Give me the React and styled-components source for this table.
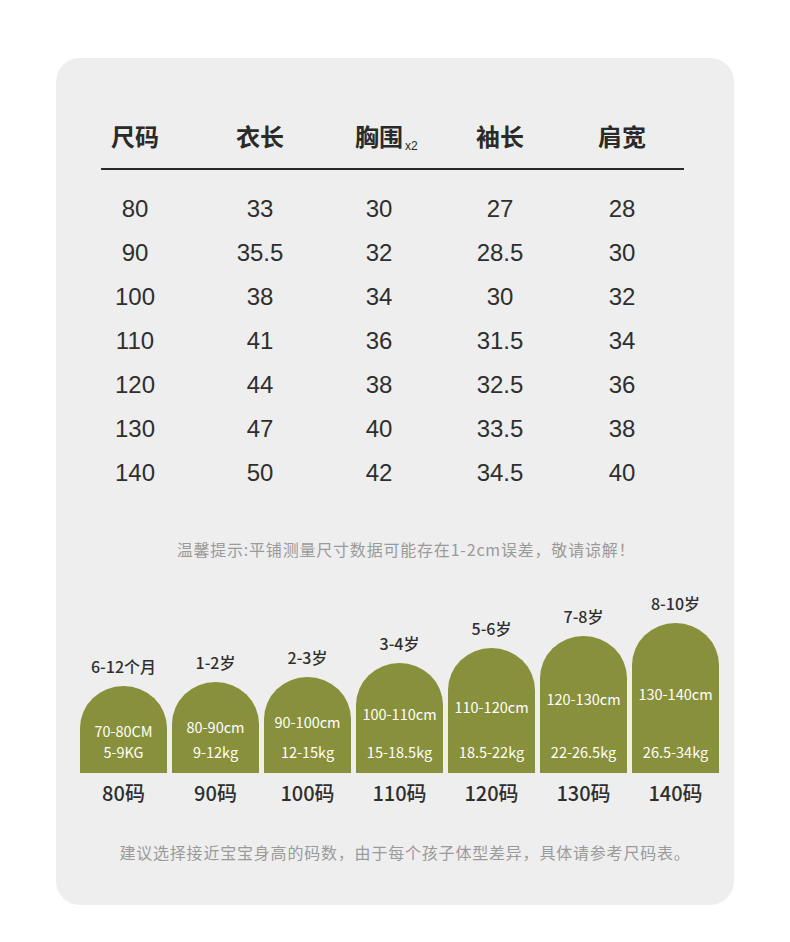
import React from "react";
import styled, { createGlobalStyle } from "styled-components";

const GlobalStyle = createGlobalStyle`
  body {
    margin: 0;
    background: #ffffff;
    font-family: "Noto Sans CJK SC", "Noto Sans", sans-serif;
  }
`;

const columns = ["尺码", "衣长", "胸围", "袖长", "肩宽"];
const rows = [
  ["80", "33", "30", "27", "28"],
  ["90", "35.5", "32", "28.5", "30"],
  ["100", "38", "34", "30", "32"],
  ["110", "41", "36", "31.5", "34"],
  ["120", "44", "38", "32.5", "36"],
  ["130", "47", "40", "33.5", "38"],
  ["140", "50", "42", "34.5", "40"],
];

const sizes = [
  { age: "6-12个月", cm: "70-80CM", kg: "5-9KG", size: "80码", h: 87, top: 45 },
  { age: "1-2岁", cm: "80-90cm", kg: "9-12kg", size: "90码", h: 91, top: 45 },
  { age: "2-3岁", cm: "90-100cm", kg: "12-15kg", size: "100码", h: 96, top: 45 },
  { age: "3-4岁", cm: "100-110cm", kg: "15-18.5kg", size: "110码", h: 110, top: 51 },
  { age: "5-6岁", cm: "110-120cm", kg: "18.5-22kg", size: "120码", h: 125, top: 59 },
  { age: "7-8岁", cm: "120-130cm", kg: "22-26.5kg", size: "130码", h: 137, top: 63 },
  { age: "8-10岁", cm: "130-140cm", kg: "26.5-34kg", size: "140码", h: 150, top: 71 },
];

const Page = styled.div`
  padding: 58px 0 37px 56px;
`;

const Card = styled.div`
  width: 678px;
  height: 847px;
  box-sizing: border-box;
  padding-top: 62px;
  background: #eeeeee;
  border-radius: 24px;
  display: flex;
  flex-direction: column;
`;

const Grid = styled.div`
  display: grid;
  grid-template-columns: 120px 130px 108px 134px 110px;
  margin-left: 19px;
`;

const HeadCell = styled.div`
  text-align: center;
  font-size: 24px;
  line-height: 32px;
  font-weight: 700;
  color: #2a2a2a;
`;

const HeadLabel = styled.span`
  position: relative;
`;

const Times = styled.span`
  position: absolute;
  left: 100%;
  bottom: 1px;
  margin-left: 2px;
  font-family: "Liberation Sans", Arial, sans-serif;
  font-size: 12px;
  line-height: 12px;
  font-weight: 400;
`;

const Rule = styled.div`
  margin: 16px 0 17px 45px;
  width: 583px;
  height: 2px;
  background: #2a2a2a;
`;

const Cell = styled.div`
  height: 44px;
  line-height: 44px;
  text-align: center;
  font-family: "Liberation Sans", Arial, sans-serif;
  font-size: 24px;
  color: #2e2e2e;
`;

const Note = styled.p`
  margin: ${(p) => p.$top}px 0 0;
  text-align: center;
  font-size: 16px;
  line-height: 20px;
  letter-spacing: ${(p) => p.$spacing}px;
  color: #9a9a9a;
  padding-left: ${(p) => p.$shift}px;
`;

const Chart = styled.div`
  display: flex;
  gap: 5px;
  align-items: flex-end;
  margin: 34px 0 0 24px;
`;

const Column = styled.div`
  width: 87px;
  display: flex;
  flex-direction: column;
  align-items: center;
`;

const Age = styled.div`
  font-size: 16px;
  line-height: 20px;
  font-weight: 500;
  color: #2e2e2e;
  margin-bottom: 10px;
  white-space: nowrap;
`;

const Arch = styled.div`
  width: 87px;
  height: ${(p) => p.$h}px;
  box-sizing: border-box;
  background: #89903c;
  border-radius: 43.5px 43.5px 0 0 / 42px 42px 0 0;
  display: flex;
  flex-direction: column;
  align-items: center;
  justify-content: space-between;
  padding: ${(p) => p.$top - 10}px 0 11px;
  color: #ffffff;
  font-size: 14.5px;
  line-height: 20px;
  white-space: nowrap;
`;

const Size = styled.div`
  margin-top: 8px;
  font-size: 20px;
  line-height: 24px;
  font-weight: 500;
  color: #2e2e2e;
  white-space: nowrap;
`;

export default function App() {
  return (
    <>
      <GlobalStyle />
      <Page>
        <Card>
          <Grid>
            {columns.map((c) => (
              <HeadCell key={c}>
                <HeadLabel>
                  {c}
                  {c === "胸围" && <Times>x2</Times>}
                </HeadLabel>
              </HeadCell>
            ))}
          </Grid>
          <Rule />
          <Grid>
            {rows.map((r) => r.map((v, i) => <Cell key={r[0] + i}>{v}</Cell>))}
          </Grid>
          <Note $top={44} $spacing={0.8} $shift={22}>
            温馨提示:平铺测量尺寸数据可能存在1-2cm误差，敬请谅解！
          </Note>
          <Chart>
            {sizes.map((s) => (
              <Column key={s.size}>
                <Age>{s.age}</Age>
                <Arch $h={s.h} $top={s.top}>
                  <span>{s.cm}</span>
                  <span>{s.kg}</span>
                </Arch>
                <Size>{s.size}</Size>
              </Column>
            ))}
          </Chart>
          <Note $top={37} $spacing={0.8} $shift={20}>
            建议选择接近宝宝身高的码数，由于每个孩子体型差异，具体请参考尺码表。
          </Note>
        </Card>
      </Page>
    </>
  );
}
